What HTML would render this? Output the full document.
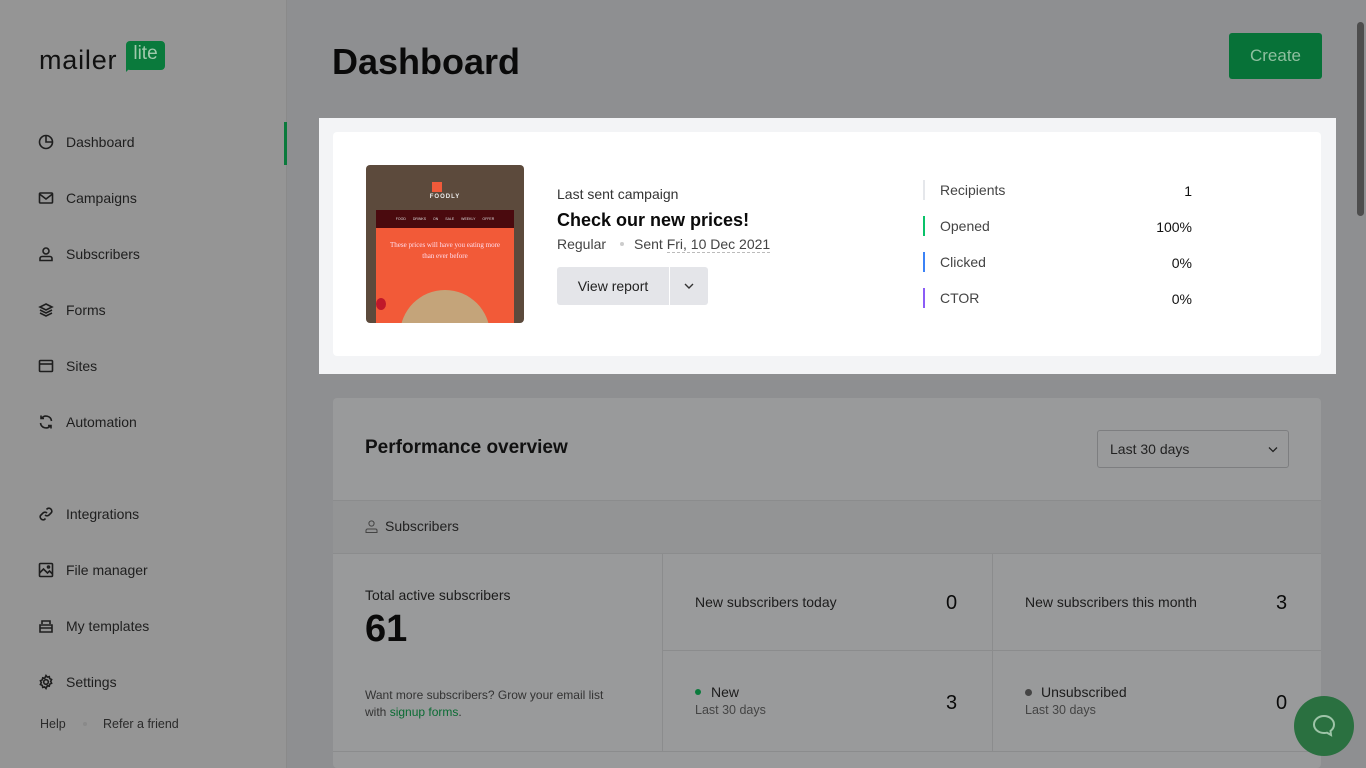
<!DOCTYPE html>
<html><head><meta charset="utf-8"><style>
*{margin:0;padding:0;box-sizing:border-box}
body{width:1366px;height:768px;overflow:hidden;position:relative;background:#8e8f91;font-family:"Liberation Sans",sans-serif;color:#1b1b1b}
.a{position:absolute}
#side{left:0;top:0;width:287px;height:768px;background:#959595;border-right:1px solid #8a8a8a}
.nav{position:absolute;left:38px;font-size:14px;color:#1e1e1e;display:flex;align-items:center;gap:12px}
.nav svg{width:16px;height:16px;fill:none;stroke:#1e1e1e;stroke-width:1.6}
.dim{background:#999a9b}
.line{background:#8b8c8d}
</style></head><body>
<div id="side" class="a">
 <div class="a" style="left:39px;top:45px;font-size:27px;color:#111;letter-spacing:0.8px">mailer</div>
 <div class="a" style="left:126px;top:41px;width:39px;height:29px;background:#0a7a3c;border-radius:4px;color:#9fc9ac;font-size:19px;text-align:center;line-height:26px">lite</div>
 <div class="a" style="left:126px;top:66px;width:0;height:0;border-left:6px solid #0a7a3c;border-bottom:6px solid transparent"></div>
 <div class="a" style="left:284px;top:122px;width:3px;height:43px;background:#0a7a3c"></div>
 <div class="nav" style="top:134px"><svg viewBox="0 0 16 16"><circle cx="8" cy="8" r="6.5"/><path d="M8 1.5V8h6.5"/></svg>Dashboard</div>
 <div class="nav" style="top:190px"><svg viewBox="0 0 16 16"><rect x="1.5" y="3" width="13" height="10" rx="1"/><path d="M1.5 4l6.5 5 6.5-5"/></svg>Campaigns</div>
 <div class="nav" style="top:246px"><svg viewBox="0 0 16 16"><circle cx="8" cy="5" r="3"/><path d="M2 14.5v-2a2 2 0 0 1 2-2h8a2 2 0 0 1 2 2v2z"/></svg>Subscribers</div>
 <div class="nav" style="top:302px"><svg viewBox="0 0 16 16"><path d="M8 2l6 3-6 3-6-3z M2 8l6 3 6-3 M2 11l6 3 6-3"/></svg>Forms</div>
 <div class="nav" style="top:358px"><svg viewBox="0 0 16 16"><rect x="1.5" y="2.5" width="13" height="11" rx="1"/><path d="M1.5 6h13"/></svg>Sites</div>
 <div class="nav" style="top:414px"><svg viewBox="0 0 16 16"><path d="M13.5 7A5.5 5.5 0 0 0 3.5 4.5M2.5 9a5.5 5.5 0 0 0 10 2.5M3 1.5v3h3M13 14.5v-3h-3"/></svg>Automation</div>
 <div class="nav" style="top:506px"><svg viewBox="0 0 16 16"><path d="M7 9a3 3 0 0 0 4 0l2.5-2.5a3 3 0 0 0-4-4L8.5 3.5M9 7a3 3 0 0 0-4 0L2.5 9.5a3 3 0 0 0 4 4l1-1"/></svg>Integrations</div>
 <div class="nav" style="top:562px"><svg viewBox="0 0 16 16"><rect x="1.5" y="1.5" width="13" height="13" rx="1"/><path d="M1.5 11l4-4 4 4 2-2 3 3"/><circle cx="10.5" cy="5" r="1"/></svg>File manager</div>
 <div class="nav" style="top:618px"><svg viewBox="0 0 16 16"><path d="M4 6V3h8v3M2 7h12v7H2zM2 10h12"/></svg>My templates</div>
 <div class="nav" style="top:674px"><svg viewBox="0 0 16 16"><circle cx="8" cy="8" r="2.3"/><path d="M8 1.5l1.3 1.6 2-.5.4 2 1.9.9-.9 1.9.9 1.9-1.9.9-.4 2-2-.5L8 14.5l-1.3-1.6-2 .5-.4-2-1.9-.9.9-1.9-.9-1.9 1.9-.9.4-2 2 .5z"/></svg>Settings</div>
 <div class="a" style="left:40px;top:717px;font-size:12.5px;color:#2a2a2a">Help</div>
 <div class="a" style="left:83px;top:722px;width:4px;height:4px;background:#8a8a8a;border-radius:2px"></div>
 <div class="a" style="left:103px;top:717px;font-size:12.5px;color:#2a2a2a">Refer a friend</div>
</div>

<div class="a" style="left:332px;top:41px;font-size:36px;font-weight:bold;color:#0a0a0a">Dashboard</div>
<div class="a" style="left:1229px;top:33px;width:93px;height:46px;background:#077238;border-radius:3px;color:#8fbf9f;font-size:17px;text-align:center;line-height:46px">Create</div>
<div class="a" style="left:1357px;top:22px;width:7px;height:194px;background:#4d4d4d;border-radius:4px"></div>

<div class="a" style="left:319px;top:118px;width:1017px;height:256px;background:#f3f4f6"></div>
<div class="a" style="left:333px;top:132px;width:988px;height:224px;background:#fff;border-radius:4px"></div>
<div class="a" style="left:366px;top:165px;width:158px;height:158px;background:#5c4a3c;border-radius:4px;overflow:hidden">
 <div class="a" style="left:66px;top:17px;width:10px;height:10px;background:#f05a3a"></div>
 <div class="a" style="left:0;top:29px;width:158px;text-align:center;font-size:6px;color:#eee;font-weight:bold;letter-spacing:1px">FOODLY</div>
 <div class="a" style="left:10px;top:45px;width:138px;height:18px;background:#4a0a0e;font-size:3.5px;color:#ddd;text-align:center;line-height:18px;word-spacing:6px">FOOD DRINKS ON SALE WEEKLY OFFER</div>
 <div class="a" style="left:10px;top:63px;width:138px;height:95px;background:#f25a38;overflow:hidden">
  <div class="a" style="left:0;top:12px;width:138px;text-align:center;font-family:'Liberation Serif',serif;font-size:7px;color:#fde;line-height:11px">These prices will have you eating more<br>than ever before</div>
  <div class="a" style="left:24px;top:62px;width:90px;height:90px;border-radius:50%;background:#c4a47a"></div>
  <div class="a" style="left:0;top:70px;width:10px;height:12px;background:#c0182a;border-radius:50%"></div>
 </div>
</div>
<div class="a" style="left:557px;top:186px;font-size:14px;color:#333">Last sent campaign</div>
<div class="a" style="left:557px;top:210px;font-size:18px;font-weight:bold;color:#0a0a0a">Check our new prices!</div>
<div class="a" style="left:557px;top:236px;font-size:14px;color:#444">Regular</div>
<div class="a" style="left:620px;top:242px;width:4px;height:4px;border-radius:2px;background:#ccc"></div>
<div class="a" style="left:634px;top:236px;font-size:14px;color:#444">Sent <span style="border-bottom:1px dashed #bbb">Fri, 10 Dec 2021</span></div>
<div class="a" style="left:557px;top:267px;width:112px;height:38px;background:#e4e5e9;border-radius:3px 0 0 3px;font-size:14px;color:#222;text-align:center;line-height:38px">View report</div>
<div class="a" style="left:670px;top:267px;width:38px;height:38px;background:#e4e5e9;border-radius:0 3px 3px 0"><svg class="a" style="left:13px;top:15px" width="12" height="8" viewBox="0 0 12 8"><path d="M2 2l4 4 4-4" fill="none" stroke="#333" stroke-width="1.4"/></svg></div>
<div class="a" style="left:923px;top:180px;width:2px;height:20px;background:#e5e7eb"></div>
<div class="a" style="left:923px;top:216px;width:2px;height:20px;background:#09c269"></div>
<div class="a" style="left:923px;top:252px;width:2px;height:20px;background:#3b82f6"></div>
<div class="a" style="left:923px;top:288px;width:2px;height:20px;background:#8b5cf6"></div>
<div class="a" style="left:940px;top:172px;font-size:14px;color:#444;line-height:36px">Recipients<br>Opened<br>Clicked<br>CTOR</div>
<div class="a" style="left:1092px;top:173px;width:100px;text-align:right;font-size:14px;color:#111;line-height:36px">1<br>100%<br>0%<br>0%</div>

<div class="a dim" style="left:333px;top:398px;width:988px;height:370px;border-radius:4px"></div>
<div class="a" style="left:365px;top:437px;font-size:19px;font-weight:bold;color:#111">Performance overview</div>
<div class="a" style="left:1097px;top:430px;width:192px;height:38px;border:1px solid #7d7e80;border-radius:3px;font-size:14px;color:#222;padding:10px 12px">Last 30 days<svg class="a" style="left:170px;top:15px" width="10" height="7" viewBox="0 0 10 7"><path d="M1 1.5l4 4 4-4" fill="none" stroke="#222" stroke-width="1.3"/></svg></div>
<div class="a" style="left:333px;top:500px;width:988px;height:54px;background:#939495;border-top:1px solid #8b8c8d;border-bottom:1px solid #8b8c8d"></div>
<svg class="a" style="left:365px;top:520px" width="13" height="13" viewBox="0 0 13 13"><circle cx="6.5" cy="3.5" r="2.6" fill="none" stroke="#444"/><path d="M1 12.5v-2a1.5 1.5 0 0 1 1.5-1.5h8a1.5 1.5 0 0 1 1.5 1.5v2z" fill="none" stroke="#444"/></svg>
<div class="a" style="left:385px;top:518px;font-size:14px;color:#222">Subscribers</div>
<div class="a line" style="left:662px;top:554px;width:1px;height:198px"></div>
<div class="a line" style="left:992px;top:554px;width:1px;height:198px"></div>
<div class="a line" style="left:663px;top:650px;width:658px;height:1px"></div>
<div class="a line" style="left:333px;top:751px;width:988px;height:1px"></div>
<div class="a" style="left:365px;top:587px;font-size:14px;color:#1c1c1c">Total active subscribers</div>
<div class="a" style="left:365px;top:608px;font-size:38px;font-weight:bold;color:#0a0a0a">61</div>
<div class="a" style="left:365px;top:687px;font-size:12px;color:#333;line-height:17px">Want more subscribers? Grow your email list<br>with <span style="color:#0a6b33">signup forms</span>.</div>
<div class="a" style="left:695px;top:594px;font-size:14px;color:#1c1c1c">New subscribers today</div>
<div class="a" style="left:946px;top:592px;font-size:20px;color:#0a0a0a">0</div>
<div class="a" style="left:1025px;top:594px;font-size:14px;color:#1c1c1c">New subscribers this month</div>
<div class="a" style="left:1276px;top:592px;font-size:20px;color:#0a0a0a">3</div>
<div class="a" style="left:695px;top:689px;width:6px;height:6px;border-radius:3px;background:#0a7a3c"></div>
<div class="a" style="left:711px;top:684px;font-size:14px;color:#1c1c1c">New</div>
<div class="a" style="left:695px;top:703px;font-size:12.5px;color:#444">Last 30 days</div>
<div class="a" style="left:946px;top:692px;font-size:20px;color:#0a0a0a">3</div>
<div class="a" style="left:1025px;top:689px;width:7px;height:7px;border-radius:4px;background:#444"></div>
<div class="a" style="left:1041px;top:684px;font-size:14px;color:#1c1c1c">Unsubscribed</div>
<div class="a" style="left:1025px;top:703px;font-size:12.5px;color:#444">Last 30 days</div>
<div class="a" style="left:1276px;top:692px;font-size:20px;color:#0a0a0a">0</div>
<div class="a" style="left:1294px;top:696px;width:60px;height:60px;border-radius:50%;background:#2a7040"><svg class="a" style="left:17px;top:17px" width="26" height="26" viewBox="0 0 26 26"><path d="M13 3c5.5 0 10 3.8 10 8.5 0 2.8-1.5 5-3.5 6.5l.5 4-4-2.3c-1 .3-2 .3-3 .3-5.5 0-10-3.8-10-8.5S7.5 3 13 3z" fill="none" stroke="#9ec4a8" stroke-width="2"/></svg></div>
</body></html>
